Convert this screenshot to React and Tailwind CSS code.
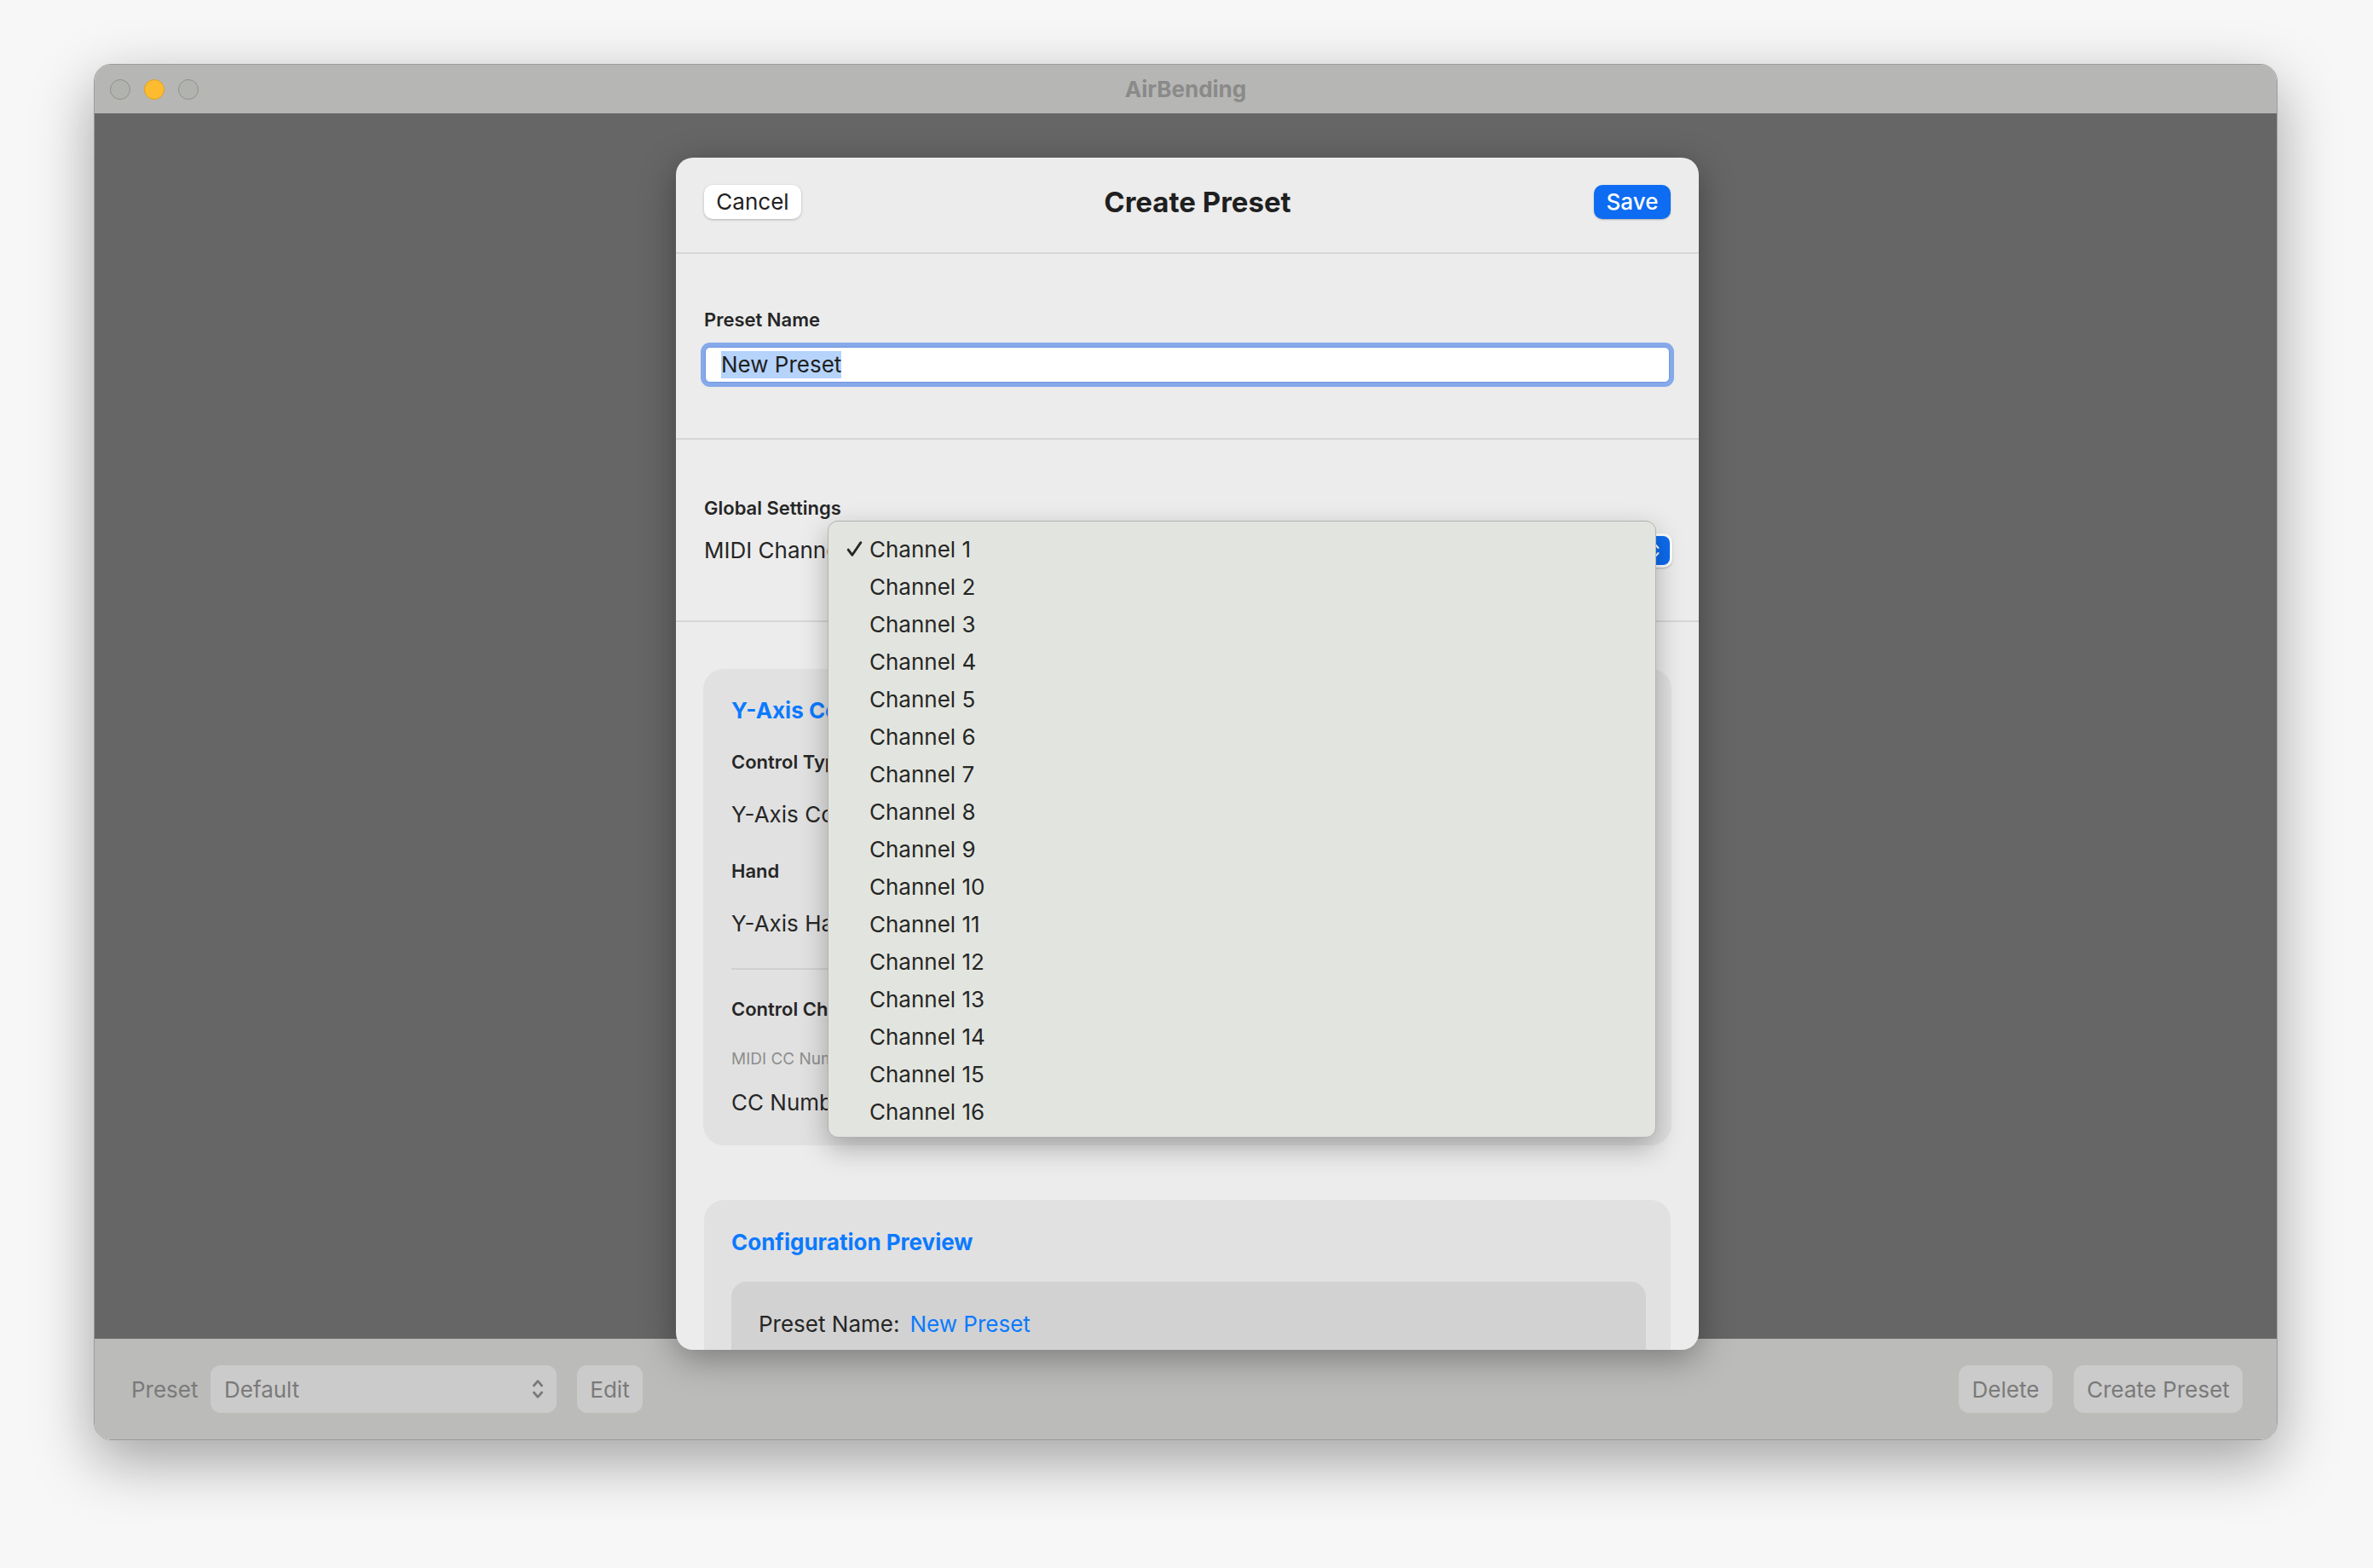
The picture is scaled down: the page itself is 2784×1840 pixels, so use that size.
import React from 'react'

const channels = Array.from({ length: 16 }, (_, i) => `Channel ${i + 1}`)

// ── small drawings ───────────────────────────────────────────────
function Chevrons({ className }) {
  return (
    <svg viewBox="0 0 12 22" className={className} fill="none" stroke="currentColor" strokeWidth="2" strokeLinecap="round" strokeLinejoin="round">
      <path d="M2.5 8 L6 4 L9.5 8" />
      <path d="M2.5 14 L6 18 L9.5 14" />
    </svg>
  )
}

function Check() {
  return (
    <svg viewBox="0 0 20 20" className="w-[21px] h-[21px]" fill="none" stroke="#262626" strokeWidth="2.7" strokeLinecap="round" strokeLinejoin="round">
      <path d="M3 10.5 L7.5 16.5 L17 2.5" />
    </svg>
  )
}

function PopupButton({ label }) {
  return (
    <div className="h-[40px] flex items-center bg-white rounded-[10px] shadow-[0_1px_2px_rgba(0,0,0,0.25)] pl-[14px] pr-[3px] gap-[12px]">
      <span className="text-[26px] leading-[32px] text-[#262626]">{label}</span>
      <div className="w-[34px] h-[34px] rounded-[8px] bg-[#0d6cf0] flex items-center justify-center text-white">
        <Chevrons className="w-[12px] h-[22px]" />
      </div>
    </div>
  )
}

// ── sheet parts ──────────────────────────────────────────────────
function SheetHeader() {
  return (
    <div className="h-[113px] flex items-center justify-between px-[33px] pb-[7px] border-b-2 border-[#d6d6d6]">
      <button className="h-[40px] w-[114px] rounded-[10px] bg-white shadow-[0_1px_3px_rgba(0,0,0,0.25)] text-[26px] leading-[32px] text-[#222]">
        Cancel
      </button>
      <div className="text-[33px] leading-[40px] font-bold text-[#1f1f1f]">Create Preset</div>
      <button className="h-[40px] w-[90px] rounded-[10px] bg-[#0d6cf2] shadow-[0_1px_2px_rgba(0,0,0,0.25)] text-[26px] leading-[32px] font-medium text-white">
        Save
      </button>
    </div>
  )
}

function NameSection() {
  return (
    <div className="px-[33px] pt-[64px] pb-[60px] border-b-2 border-[#d6d6d6]">
      <div className="text-[22px] leading-[26px] font-semibold text-[#262626]">Preset Name</div>
      <div className="-mx-[4px] mt-[14px] rounded-[11px] bg-[#86a9ea] p-[5px]">
        <div className="h-[42px] rounded-[6px] bg-white border border-[#6d96e2] flex items-center pl-[18px]">
          <span className="text-[26px] leading-[32px] text-[#1f1f1f] bg-[#b5d3fb]">New Preset</span>
        </div>
      </div>
    </div>
  )
}

function GlobalSection() {
  return (
    <div className="px-[33px] pt-[67px] pb-[62px] border-b-2 border-[#d6d6d6]">
      <div className="text-[22px] leading-[26px] font-semibold text-[#262626]">Global Settings</div>
      <div className="mt-[17px] h-[40px] flex items-center justify-between">
        <span className="text-[26px] leading-[32px] text-[#262626]">MIDI Channel</span>
        <div className="-mr-[2px]">
          <PopupButton label="Channel 1" />
        </div>
      </div>
    </div>
  )
}

function AxisCard() {
  return (
    <div className="mx-[32px] rounded-[24px] bg-[#e1e1e1] px-[33px] pt-[24px] pb-[14px]">
      <div className="h-[48px] flex items-center text-[26px] font-bold text-[#0b7aff]">Y-Axis Configuration</div>
      <div className="h-[74px] flex items-center text-[22px] font-semibold text-[#262626]">Control Type</div>
      <div className="h-[48px] flex items-center justify-between">
        <span className="text-[26px] text-[#262626]">Y-Axis Control Type</span>
        <PopupButton label="Control Change" />
      </div>
      <div className="h-[86px] flex items-center text-[22px] font-semibold text-[#262626]">Hand</div>
      <div className="h-[36px] flex items-center justify-between">
        <span className="text-[26px] text-[#262626]">Y-Axis Hand</span>
        <PopupButton label="Right" />
      </div>
      <div className="mt-[35px] h-[2px] bg-[#d0d0d0]" />
      <div className="h-[92px] flex items-center text-[22px] font-semibold text-[#262626]">Control Change Settings</div>
      <div className="h-[26px] flex items-center text-[19px] text-[#8e8e8e]">MIDI CC Number (0-127)</div>
      <div className="h-[74px] flex items-center justify-between">
        <span className="text-[26px] text-[#262626]">CC Number</span>
        <span className="text-[26px] text-[#262626]">1</span>
      </div>
    </div>
  )
}

function PreviewCard() {
  return (
    <div className="mx-[33px] mt-[64px] rounded-[24px] bg-[#e1e1e1] px-[32px] pt-[25px] pb-[30px]">
      <div className="h-[48px] flex items-center text-[26px] font-bold text-[#0b7aff]">Configuration Preview</div>
      <div className="mt-[23px] -mr-[3px] h-[140px] rounded-[18px] bg-[#d2d2d2] px-[32px] pt-[25px]">
        <div className="h-[48px] flex items-center gap-[12px] text-[26px]">
          <span className="text-[#262626]">Preset Name:</span>
          <span className="text-[#0b7aff]">New Preset</span>
        </div>
      </div>
    </div>
  )
}

function ChannelMenu() {
  return (
    <div className="absolute left-[178px] top-[426px] w-[972px] h-[724px] rounded-[12px] bg-[#e2e5df] border border-[#b2b2b2] shadow-[0_12px_32px_rgba(0,0,0,0.28)] pt-[10px]">
      {channels.map((c, i) => (
        <div key={c} className="h-[44px] flex items-center">
          <div className="w-[48px] pl-[20px] flex items-center">{i === 0 && <Check />}</div>
          <span className="text-[26px] text-[#262626]">{c}</span>
        </div>
      ))}
    </div>
  )
}

function Sheet() {
  return (
    <div className="absolute left-[682px] top-[109px] w-[1200px] h-[1399px] rounded-[20px] bg-[#ececec] overflow-hidden shadow-[0_10px_40px_rgba(0,0,0,0.35)]">
      <SheetHeader />
      <NameSection />
      <GlobalSection />
      <div className="pt-[55px]">
        <AxisCard />
        <PreviewCard />
      </div>
      <ChannelMenu />
    </div>
  )
}

// ── window chrome ────────────────────────────────────────────────
function TitleBar() {
  return (
    <div className="h-[57px] shrink-0 bg-[#b6b6b4] grid grid-cols-[1fr_auto_1fr] items-center">
      <div className="flex items-center gap-[16px] pl-[18px]">
        <div className="w-[24px] h-[24px] rounded-full bg-[#b1b3af] border border-[#8f918d]" />
        <div className="w-[24px] h-[24px] rounded-full bg-[#fdbc2f] border border-[#dba02a]" />
        <div className="w-[24px] h-[24px] rounded-full bg-[#b1b3af] border border-[#8f918d]" />
      </div>
      <div className="text-[26px] font-bold text-[#8a8a8a]">AirBending</div>
      <div />
    </div>
  )
}

function BottomBar() {
  return (
    <div className="h-[118px] shrink-0 bg-[#bbbbb9] flex items-center pl-[43px] pr-[40px] text-[26px] text-[#7a7a7a]">
      <span className="w-[93px]">Preset</span>
      <div className="w-[406px] h-[56px] rounded-[12px] bg-[#cbcbcb] flex items-center justify-between pl-[16px] pr-[14px]">
        <span>Default</span>
        <Chevrons className="w-[16px] h-[30px] text-[#7a7a7a]" />
      </div>
      <div className="ml-[24px] w-[77px] h-[56px] rounded-[12px] bg-[#cbcbcb] flex items-center justify-center">Edit</div>
      <div className="flex-1" />
      <div className="w-[110px] h-[56px] rounded-[12px] bg-[#cbcbcb] flex items-center justify-center">Delete</div>
      <div className="ml-[25px] w-[198px] h-[56px] rounded-[12px] bg-[#cbcbcb] flex items-center justify-center">Create Preset</div>
    </div>
  )
}

export default function App() {
  return (
    <div className="w-[2784px] h-[1840px] bg-[#f7f7f7] pt-[75px] pl-[110px] [font-family:Inter,'Liberation_Sans',sans-serif]">
      <div className="relative w-[2562px] h-[1615px] rounded-[20px] overflow-hidden flex flex-col border border-[#9c9c9c] shadow-[0_24px_70px_rgba(0,0,0,0.35)]">
        <TitleBar />
        <div className="flex-1 bg-[#666666]" />
        <BottomBar />
        <Sheet />
      </div>
    </div>
  )
}
